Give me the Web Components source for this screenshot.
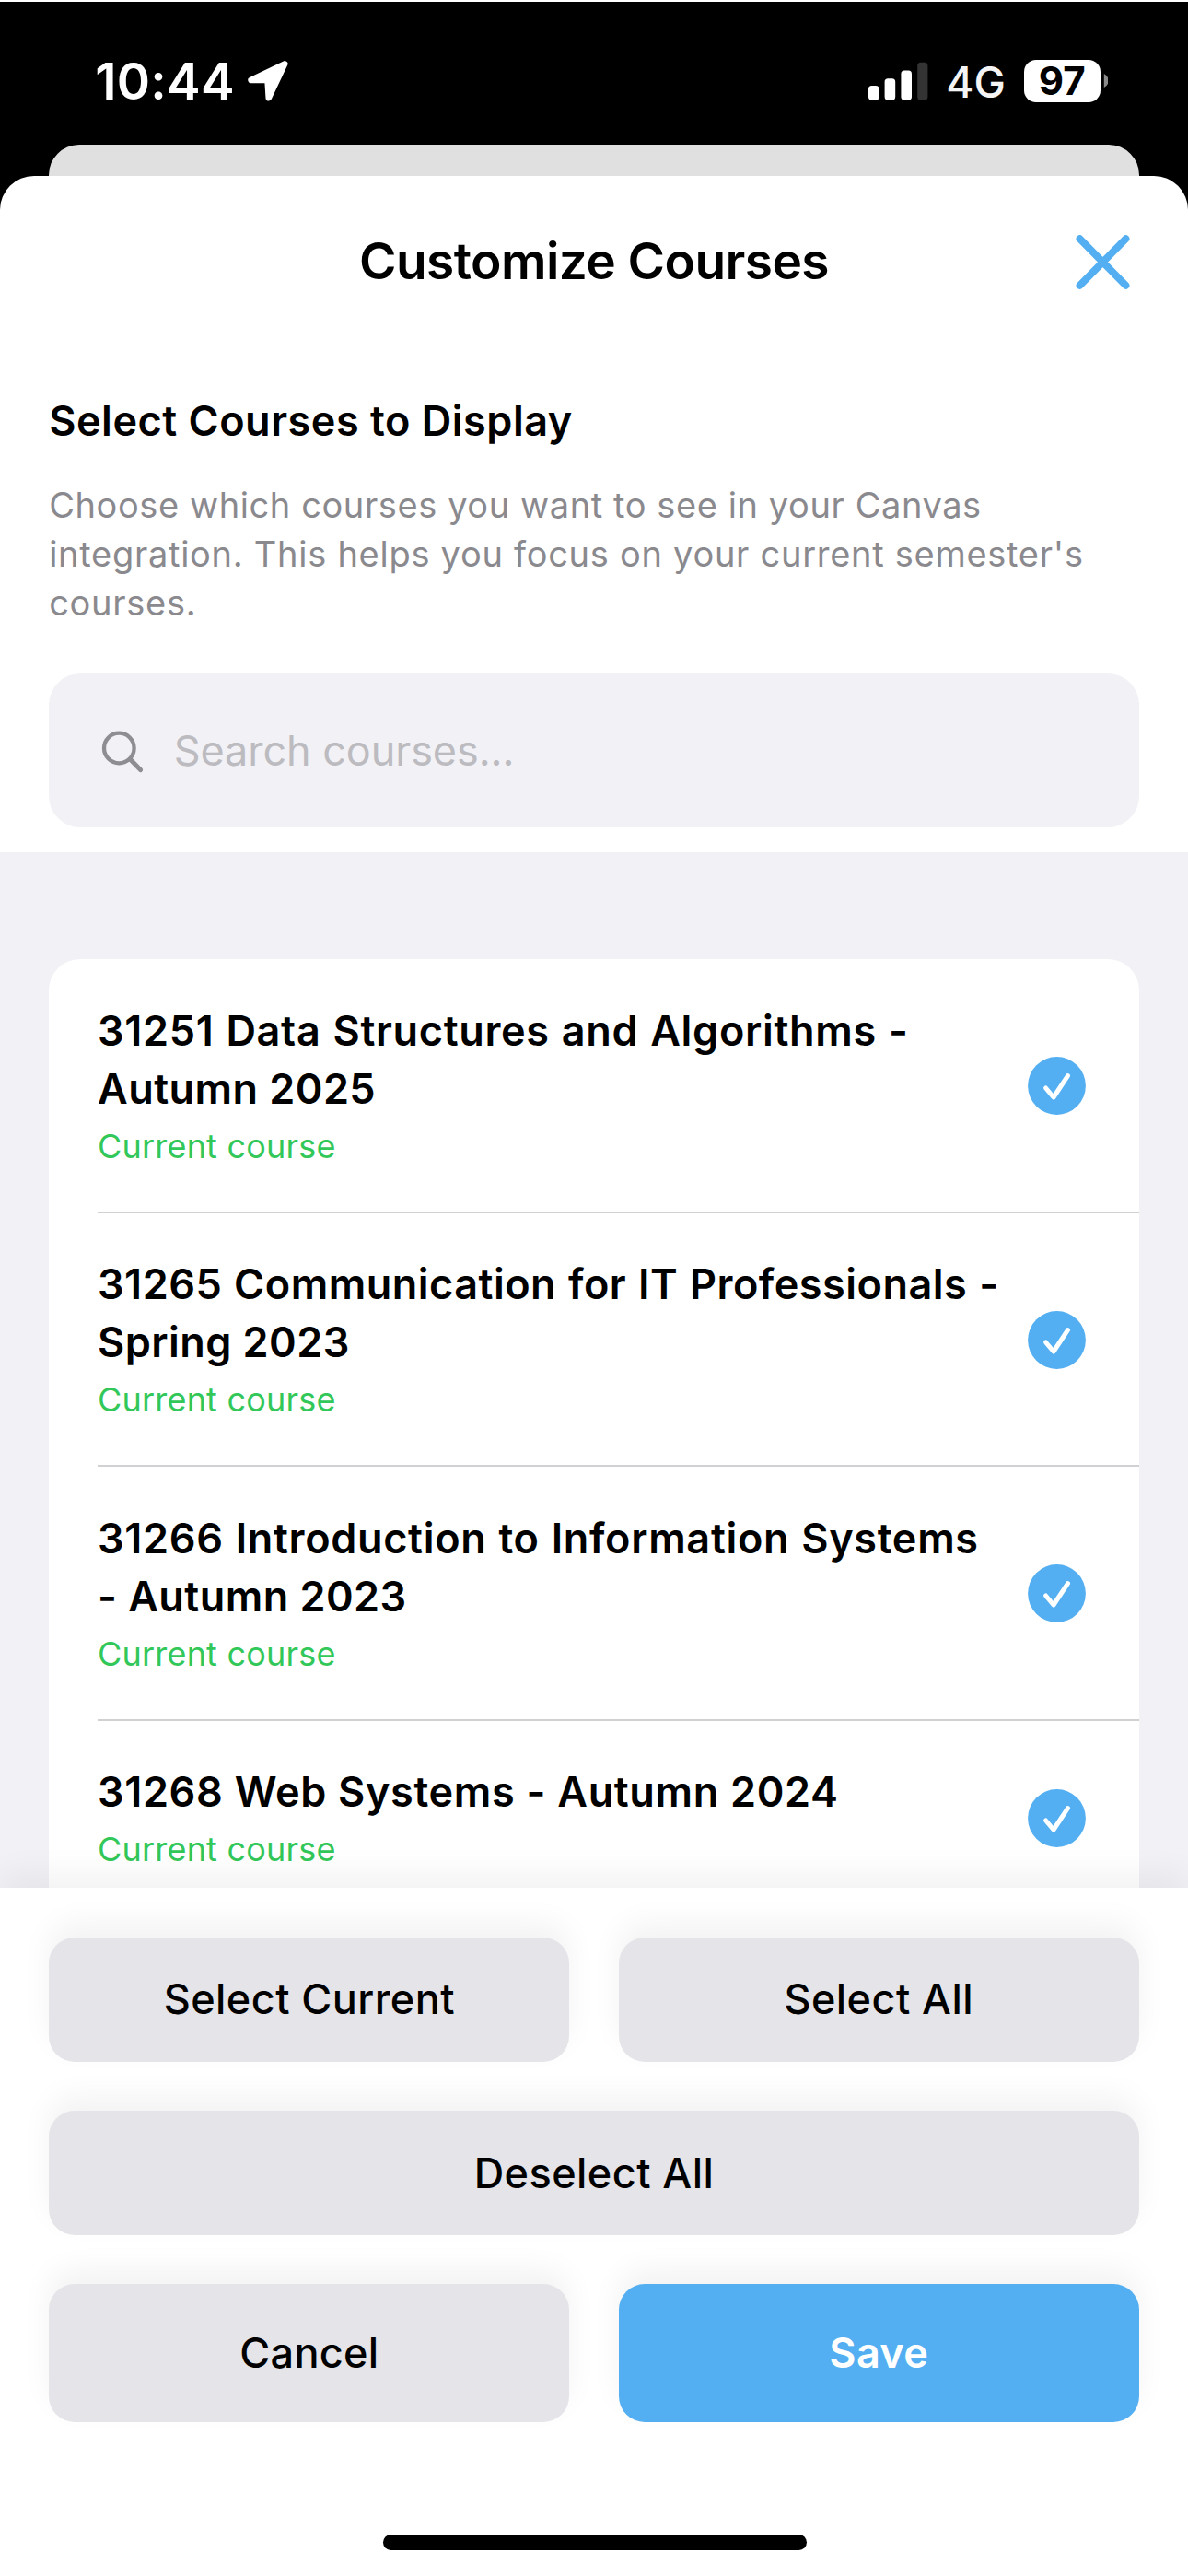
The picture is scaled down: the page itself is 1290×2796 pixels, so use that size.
<!DOCTYPE html>
<html lang="en">
<head>
<meta charset="utf-8">
<title>Customize Courses</title>
<style>
html,body{margin:0;padding:0;background:#000}
body{width:1290px;height:2796px;overflow:hidden;font-family:Inter,"Liberation Sans",sans-serif;color:#000}
</style>
</head>
<body>
<course-screen></course-screen>
<script>
const define = (name, html) => {
  const tpl = document.createElement("template");
  tpl.innerHTML = html;
  customElements.define(name, class extends HTMLElement {
    constructor() {
      super();
      this.attachShadow({ mode: "open" }).append(tpl.content.cloneNode(true));
    }
  });
};

define("status-bar", `
<style>
:host{display:flex;box-sizing:border-box;height:157.3px;border-top:2px solid #fff;background:#000;color:#fff;padding:0 86.8px 0 103.3px;justify-content:space-between}
.side{display:flex;align-items:center;height:171.4px}
.time{font-size:55px;font-weight:600;letter-spacing:.25px;width:151px;line-height:60px}
svg{display:block;flex:none}
.arrow{margin-left:14px}
.net{font-size:46px;line-height:54px;font-weight:450;color:#f4f4f4;margin-left:19px;letter-spacing:.2px;padding-top:3px}
.batt{box-sizing:border-box;margin-left:20px;width:82.5px;height:46px;border-radius:13px;background:#fff;color:#000;font-weight:700;font-size:42px;line-height:46px;text-align:center;letter-spacing:.2px}
</style>
<div class="side"><span class="time">10:44</span>
<svg class="arrow" width="46" height="46" viewBox="0 0 46 46"><path d="M41.2 4.4 L4.6 22 L21.8 22 Q22.6 22 22.6 22.8 L23.8 41.2 Z" fill="#fff" stroke="#fff" stroke-width="6.6" stroke-linejoin="round"/></svg></div>
<div class="side">
<svg width="65" height="42" viewBox="0 0 65 42"><g fill="#fff"><rect x="0" y="26" width="11.6" height="15.6" rx="3.6"/><rect x="17.6" y="18.2" width="11.6" height="23.4" rx="3.6"/><rect x="35.4" y="9.6" width="11.6" height="32" rx="3.6"/></g><rect x="53.2" y=".8" width="11.2" height="40.8" rx="3.6" fill="#333"/></svg>
<span class="net">4G</span><div class="batt">97</div>
<svg width="8.6" height="15" viewBox="0 0 8.6 15"><path d="M3.8 0 Q8.6 2.5 8.6 7.5 Q8.6 12.5 3.8 15 Z" fill="#8a8a8a"/></svg>
</div>`);

define("sheet-header", `
<style>
:host{display:grid;grid-template-columns:1fr auto 1fr;align-items:center;height:186px;padding:0 60px}
h1{margin:0 0 2px;grid-column:2;font-size:55px;line-height:66px;font-weight:600;letter-spacing:-.57px}
svg{display:block;justify-self:end;margin-top:1px}
</style>
<h1><slot></slot></h1>
<svg width="65" height="65" viewBox="0 0 65 65"><path d="M7.6 7.2 L57.4 57.8 M57.4 7.2 L7.6 57.8" stroke="#53aff1" stroke-width="8" stroke-linecap="round"/></svg>`);

define("search-field", `
<style>
:host{display:flex;align-items:center;box-sizing:border-box;height:167px;border-radius:34px;background:#f2f1f6;padding:1px 56px 0;gap:31.5px;font-size:45px;line-height:54px;letter-spacing:-.07px;color:#bcbbc0}
svg{display:block}
</style>
<svg width="48" height="48" viewBox="0 0 48 48" fill="none" stroke="#8e8d92" stroke-linecap="round"><circle cx="20.3" cy="21" r="16.3" stroke-width="4.3"/><path d="M32.3 33 L43.5 44.6" stroke-width="5"/></svg>
<span><slot></slot></span>`);

define("course-intro", `
<style>
:host{display:block;padding:50px 53.2px 26.8px;box-sizing:border-box}
h2{margin:0 0 35.3px;font-size:45px;line-height:60px;font-weight:600;letter-spacing:.52px}
p{margin:0 0 50.5px;font-size:38px;line-height:53px;letter-spacing:.72px;color:#8a898e}
p::first-line{letter-spacing:.59px}
</style>
<h2><slot name="heading"></slot></h2>
<p><slot name="text"></slot></p>
<slot></slot>`);

define("course-row", `
<style>
:host{display:flex;flex-direction:column;padding-left:52.7px}
.row{display:flex;align-items:center;gap:23px;padding:45.2px 57.3px 48.3px 0}
.rule{height:2px;background:#d1d1d3}
.txt{flex:1;display:flex;flex-direction:column;gap:8px}
.name{font-size:45px;line-height:63px;font-weight:600;letter-spacing:.45px}
.name::first-line{letter-spacing:var(--track,.68px);word-spacing:var(--word,1px)}
.tag{font-size:36px;line-height:46px;letter-spacing:.2px;color:#32c759}
svg{display:block;flex:none;margin-top:4px}
</style>
<div class="row"><div class="txt"><div class="name"><slot></slot></div><div class="tag"><slot name="tag"></slot></div></div>
<svg width="63" height="63" viewBox="0 0 63 63"><circle cx="31.5" cy="31.5" r="31.4" fill="#53aff1"/><path d="M19.6 34 L28 44 L43.5 20.6" fill="none" stroke="#fff" stroke-width="5" stroke-linecap="round" stroke-linejoin="round"/></svg></div>
<div class="rule"></div>`);

define("course-list", `
<style>
:host{display:block;flex:1;min-height:0;overflow:hidden;background:#f2f1f6;padding:116.2px 53.3px 0;box-sizing:border-box}
.card{background:#fff;border-radius:34px}
</style>
<div class="card"><slot></slot></div>`);

define("action-button", `
<style>
:host{display:flex;flex:1;align-items:center;justify-content:center;box-sizing:border-box;height:135.4px;border-radius:28px;background:#e5e4e9;font-size:45px;line-height:54px;font-weight:500;letter-spacing:.45px;box-shadow:0 -16px 33px rgba(0,0,0,.05)}
:host([tall]){height:149.4px;letter-spacing:.3px}
:host([primary]){background:#53aff1;color:#fff;font-weight:600}
</style>
<slot></slot>`);

define("action-footer", `
<style>
:host{display:flex;flex-direction:column;box-sizing:border-box;height:746.6px;position:relative;background:#fff;padding:53.3px 53.3px 0;gap:53px;box-shadow:0 -16px 33px rgba(0,0,0,.05)}
.pair{display:flex;gap:53.4px}
.home{align-self:center;width:460px;height:17.6px;border-radius:9px;background:#000;margin:68.8px 0 0 1px}
</style>
<div class="pair"><action-button>Select Current</action-button><action-button>Select All</action-button></div>
<div class="pair"><action-button>Deselect All</action-button></div>
<div class="pair"><action-button tall>Cancel</action-button><action-button tall primary>Save</action-button></div>
<div class="home"></div>`);

define("course-screen", `
<style>
:host{display:flex;flex-direction:column;width:1290px;height:2796px;background:#000}
.back{height:33.4px;margin:0 53.3px;background:#e0e0e0;border-radius:33px 33px 0 0}
.sheet{flex:1;min-height:0;display:flex;flex-direction:column;background:#fff;border-radius:37px 37px 0 0;overflow:hidden}
.tight{--track:.5px}
.even{--word:.2px;--track:.64px}
</style>
<status-bar></status-bar>
<div class="back"></div>
<div class="sheet">
<sheet-header>Customize Courses</sheet-header>
<course-intro>
<span slot="heading">Select Courses to Display</span>
<span slot="text">Choose which courses you want to see in your Canvas integration. This helps you focus on your current semester's courses.</span>
<search-field>Search courses...</search-field>
</course-intro>
<course-list>
<course-row>31251 Data Structures and Algorithms - Autumn 2025<span slot="tag">Current course</span></course-row>
<course-row class="tight">31265 Communication for IT Professionals - Spring 2023<span slot="tag">Current course</span></course-row>
<course-row>31266 Introduction to Information Systems - Autumn 2023<span slot="tag">Current course</span></course-row>
<course-row class="even">31268 Web Systems - Autumn 2024<span slot="tag">Current course</span></course-row>
</course-list>
<action-footer></action-footer>
</div>`);
</script>
</body>
</html>
